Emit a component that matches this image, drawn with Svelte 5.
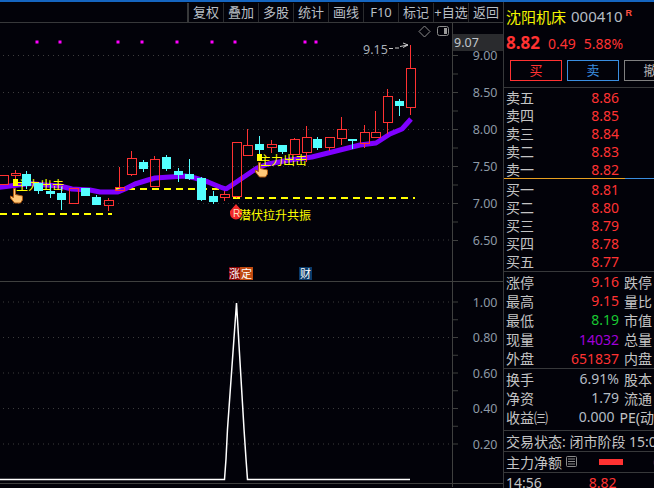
<script>
  const tools = ['复权','叠加','多股','统计','画线','F10','标记','+自选','返回'];
  // x, body top, body bottom, wick top, wick bottom, up?
  const candles = [
    [3,176,185,176,185,1],[15,174,176,171,180,1],[26,175,186,172,190,0],[38,184,191,184,195,0],
    [50,192,194,185,199,0],[61,194,200,188,211,0],[73,189,204,189,204,1],[85,189,196,189,196,0],
    [96,198,205,196,205,0],[108,201,206,199,212,1],[119,188,191,168,191,1],[131,159,175,152,177,1],
    [143,163,169,161,173,0],[154,160,187,157,187,1],[166,158,169,156,172,0],[178,172,175,169,183,0],
    [189,175,179,160,181,0],[201,179,200,178,202,0],[213,197,202,192,205,0],[224,195,198,192,202,1],
    [236,143,197,143,199,1],[247,146,156,130,156,1],[259,145,150,137,155,0],[271,145,148,141,154,1],
    [282,146,152,146,155,0],[294,140,155,139,155,1],[306,138,153,127,163,1],[317,140,148,138,151,0],
    [329,138,148,138,152,1],[341,130,139,118,146,1],[352,140,141,140,150,0],[364,133,144,126,149,1],
    [375,133,138,112,138,1],[387,97,123,90,135,1],[399,102,106,100,117,0],[410,69,108,46,116,1]
  ];
  const trend = [[-5,189],[10,187],[30,184.5],[45,186],[60,187],[72,190],[90,191],[100,193],[118,193],[125,190],[135,185],[148,181],[155,179],[170,178],[185,177],[195,179],[208,183],[220,188],[226,190],[232,186],[257,169],[268,165],[290,161],[312,158],[340,151],[360,146],[376,144],[390,135],[402,130],[411,120]]
    .map(p => p.join(',')).join(' ');
  const dots = [37,60,118,142,177,212,235,305,316];
  const priceAxis = [['9.00',56.5],['8.50',93.5],['8.00',130.5],['7.50',167.5],['7.00',204.5],['6.50',241]];
  const volAxis = [['1.00',303],['0.80',338.5],['0.60',374],['0.40',409.5],['0.20',445]];
  const priceTicks = Array.from({length: 11}, (_, i) => 56.5 + i * 18.5);
  const volTicks = Array.from({length: 9}, (_, i) => 303 + i * 17.75);
  const asks = [['卖五','8.86'],['卖四','8.85'],['卖三','8.84'],['卖二','8.83'],['卖一','8.82']];
  const bids = [['买一','8.81'],['买二','8.80'],['买三','8.79'],['买四','8.78'],['买五','8.77']];
  const stats = [
    ['涨停','9.16','red','跌停'],['最高','9.15','red','量比'],['最低','8.19','green','市值'],
    ['现量','14032','purple','总量'],['外盘','651837','red','内盘']
  ];
  const stats2 = [
    ['换手','6.91%','grey','股本'],['净资','1.79','grey','流通'],['收益㈢','0.000','grey','PE(动']
  ];
  const handPath = 'M3.5.5h2v6l7 1.5v4l-2 3H4.500l-4-5v-2l3 1.500z';
</script>

<div class="screen">
  <div class="topline"></div>
  <div class="main">
    <div class="left">
      <div class="toolbar">
        {#each tools as t}<div class="tool">{t}</div>{/each}
      </div>
      <svg class="chart" width="503" height="464" viewBox="0 24 503 464">
        {#each priceAxis as a}
          <line class="grid" x1="3" x2="452" y1={a[1]} y2={a[1]} />
        {/each}
        {#each volAxis as a}
          <line class="grid" x1="3" x2="452" y1={a[1]} y2={a[1]} />
        {/each}
        <line class="frame" x1="452.5" x2="452.5" y1="24" y2="488" />
        <line class="frame" x1="0" x2="503" y1="282.5" y2="282.5" />
        <line class="frame" x1="0" x2="503" y1="484.5" y2="484.5" />
        {#each priceTicks as y}<line class="frame" x1="452" x2="458" y1={y} y2={y} />{/each}
        {#each volTicks as y}<line class="frame" x1="452" x2="458" y1={y} y2={y} />{/each}
        {#each priceAxis as a}<text class="axis" x="497.500" y={a[1] + 4.5} text-anchor="end">{a[0]}</text>{/each}
        {#each volAxis as a}<text class="axis" x="497.500" y={a[1] + 4.5} text-anchor="end">{a[0]}</text>{/each}

        <rect x="453" y="35" width="50" height="17" fill="#2a2b2e" />
        <text class="axis light" x="454" y="48">9.07</text>

        {#each dots as x}<rect x={x - 1.5} y="41.5" width="3" height="3" fill="#ff00ff" />{/each}

        <polyline class="dash" points="0,215 112,215" />
        <polyline class="dash" points="116,190 220,190" />
        <polyline class="dash" points="233,199 415,199" />
        <polyline class="trend" points={trend} />
        <text class="sig" x="16" y="191">主力出击</text>

        <g shape-rendering="crispEdges">
          {#each candles as c}
            {#if c[5]}
              <line class="r" x1={c[0] + .5} x2={c[0] + .5} y1={c[3]} y2={c[1]} />
              <line class="r" x1={c[0] + .5} x2={c[0] + .5} y1={c[2]} y2={c[4]} />
              <rect class="r" x={c[0] - 4} y={c[1] + .5} width="9" height={c[2] - c[1]} />
            {:else}
              <line class="c" x1={c[0] + .5} x2={c[0] + .5} y1={c[3]} y2={c[4]} />
              <rect fill="#54ffff" x={c[0] - 4} y={c[1]} width="9" height={c[2] - c[1] + 1} />
            {/if}
          {/each}
        </g>

        <rect x="13" y="180" width="5" height="7" fill="#ffff00" />
        <g transform="translate(10,189)"><path class="hand" d={handPath} /></g>
        <rect x="257" y="155" width="5" height="7" fill="#ffff00" />
        <text class="sig" x="259" y="166">主力出击</text>
        <g transform="translate(255,163)"><path class="hand" d={handPath} /></g>

        <path d="M236 205l6 7v2.500a6 6 0 0 1-12 0V212z" fill="#f02a2a" />
        <text class="rmark" x="233" y="218">R</text>
        <text class="sig" x="239" y="220.500">潜伏拉升共振</text>

        <text class="note" x="363" y="55">9.15</text>
        <path class="arrow" d="M389 49.500h4m2-.5h4m1-1.500l8-1.500m-5-2l5 2-5 2.500" />
        <path class="icon" d="M424.500 27l5.500 5.500-5.500 5.500-5.500-5.500z" />
        <rect class="icon" x="437.500" y="27.500" width="11" height="9" rx="2" />
        <rect x="444" y="29" width="3" height="6" fill="#9a9a9a" />

        <rect x="229" y="268" width="11" height="13" fill="#8a0505" />
        <rect x="240" y="268" width="13" height="13" fill="#c04a10" />
        <rect x="299" y="268" width="13" height="13" fill="#0a3a6a" />
        <text class="tag" x="229" y="279">涨</text>
        <text class="tag" x="241" y="279">定</text>
        <text class="tag" x="300" y="279">财</text>

        <polyline class="vol" points="0,480.500 224.500,480.500 226,460 227.500,430 236.500,304 244,430 246,460 247.500,480.500 410,480.500" />
      </svg>
    </div>

    <aside class="panel">
      <div class="title">
        <span class="name">沈阳机床</span>
        <span class="code">000410</span>
        <span class="rflag">R</span>
      </div>
      <div class="price">
        <b>8.82</b><span>0.49</span><span>5.88%</span>
      </div>
      <div class="btns">
        <div class="btn buy">买</div>
        <div class="btn sell">卖</div>
        <div class="btn cancel">撤</div>
      </div>
      <div class="book first">
        {#each asks as r}
          <div class="row depth"><span class="lab">{r[0]}</span><span class="val red">{r[1]}</span></div>
        {/each}
      </div>
      <div class="split"><i></i><em></em></div>
      <div class="book bids">
        {#each bids as r}
          <div class="row depth"><span class="lab">{r[0]}</span><span class="val red">{r[1]}</span></div>
        {/each}
      </div>
      <div class="book sep">
        {#each stats as r}
          <div class="row quote"><span class="lab">{r[0]}</span><span class="val {r[2]}">{r[1]}</span><span class="lab2">{r[3]}</span></div>
        {/each}
      </div>
      <div class="book sep pad">
        {#each stats2 as r}
          <div class="row quote"><span class="lab">{r[0]}</span><span class="val {r[2]}">{r[1]}</span><span class="lab2">{r[3]}</span></div>
        {/each}
      </div>
      <div class="line sep">交易状态: 闭市阶段 15:00</div>
      <div class="line sep flow">
        <span>主力净额</span>
        <svg width="11" height="11" viewBox="0 0 11 11"><path d="M1.500.5h8a1 1 0 0 1 1 1v8a1 1 0 0 1-1 1h-8a1 1 0 0 1-1-1v-8a1 1 0 0 1 1-1zM2 3h7M2 5.500h7M2 8h7" fill="none" stroke="#8a8a8a"/></svg>
        <i class="bar"></i>
        <span class="edge">6</span>
      </div>
      <div class="line sep tick"><span>14:56</span><span class="tp">8.82</span></div>
    </aside>
  </div>
</div>

<style>
  :global(body) { margin: 0; background: #020209; overflow: hidden; }
  .screen {
    width: 654px; height: 488px; overflow: hidden; background: #020209; color: #c4c4c4;
    font-family: "Noto Sans", "Noto Sans CJK SC", sans-serif;
  }
  .topline { height: 2px; background: #1565c0; }
  .main { display: flex; height: 486px; }
  .left { width: 503px; flex: none; }
  .toolbar {
    display: flex; justify-content: flex-end; border-bottom: 1px solid #37383a;
    padding-top: 1px; height: 19px;
  }
  .tool {
    width: 34px; border-left: 1px solid #2a2b2e; font-size: 13px; line-height: 19px;
    text-align: center; white-space: nowrap; color: #b9bfc5; overflow: hidden;
  }
  .tool:first-child { border-left: 2px solid #37383a; }
  .chart { display: block; }
  .grid { stroke: #3c3c3c; stroke-width: 1; stroke-dasharray: 1 4; }
  .frame { stroke: #3f403f; stroke-width: 1; }
  .axis { font-family: "Noto Sans", sans-serif; font-size: 12.500px; fill: #8d99a6; }
  .light { fill: #c0c6cc; }
  .dash { stroke: #ffff00; stroke-width: 2; stroke-dasharray: 7 5; fill: none; }
  .trend { stroke: #7f00ff; stroke-width: 5; fill: none; stroke-linejoin: bevel; }
  .sig { font-family: "Noto Sans CJK SC", sans-serif; font-size: 12px; fill: #ffff00; }
  .r { stroke: #ff3232; fill: none; stroke-width: 1; }
  .c { stroke: #54ffff; stroke-width: 1; }
  .hand { fill: #ffc878; stroke: #b05a10; stroke-width: 1; }
  .rmark { font-family: "Liberation Sans", sans-serif; font-size: 10px; fill: #ffe0c0; }
  .note { font-family: "Noto Sans", sans-serif; font-size: 12.500px; fill: #a9b0b8; }
  .arrow { stroke: #c8c8c8; stroke-width: 1; fill: none; }
  .icon { stroke: #8c8c8c; stroke-width: 1; fill: none; }
  .tag { font-family: "Noto Sans CJK SC", sans-serif; font-size: 11px; fill: #fff; }
  .vol { stroke: #fff; stroke-width: 1.500; fill: none; }

  .panel { flex: 1; border-left: 1px solid #37383a; min-width: 0; overflow: hidden; font-size: 14px; }
  .title { display: flex; align-items: center; height: 18px; margin-top: 5px; padding-left: 2px; white-space: nowrap; }
  .name { font-size: 15px; color: #f4f400; }
  .code { font-size: 15px; color: #b4bcc4; margin-left: 5px; }
  .rflag { font: bold 9px "Liberation Sans", sans-serif; color: #ff5040; margin: -6px 0 0 3px; }
  .price { display: flex; align-items: baseline; height: 20px; margin-top: 6px; padding-left: 2px; color: #ff3232; font-size: 14px; white-space: nowrap; }
  .price b { font-size: 17px; width: 42px; }
  .price span { margin-right: 8px; }
  .btns { display: flex; gap: 5px; margin: 9px 0 0 6px; height: 21px; }
  .btn { flex: none; box-sizing: border-box; width: 52px; border: 1px solid; text-align: center; font-size: 13px; line-height: 19px; }
  .buy { border-color: #ff3232; color: #ff3232; }
  .sell { border-color: #3a8ee0; color: #3a8ee0; }
  .cancel { border-color: #808080; color: #b0b0b0; }
  .book.first { border-top: 1px solid #37383a; margin-top: 6px; }
  .row { display: flex; align-items: center; padding-left: 2px; white-space: nowrap; }
  .depth { height: 18px; }
  .quote { height: 19.200px; }
  .lab { width: 50px; color: #c4c4c4; }
  .val { width: 63px; text-align: right; font-size: 14px; }
  .lab2 { margin-left: 5px; color: #c4c4c4; }
  .red { color: #ff3232; }
  .green { color: #19c832; }
  .purple { color: #a000d8; }
  .grey { color: #b4bcc4; }
  .split { display: flex; height: 1px; margin-bottom: 1px; }
  .split i { width: 121px; background: #e8a020; }
  .split em { flex: 1; background: #3a8ee0; }
  .sep { border-top: 1px solid #37383a; }
  .book.bids { margin-bottom: 1px; }
  .book.pad { padding-bottom: 3px; }
  .line { display: flex; align-items: center; height: 20px; padding-left: 2px; white-space: nowrap; }
  .flow svg { margin-left: 4px; flex: none; }
  .bar { width: 24px; height: 6px; background: #ff3232; margin-left: 22px; flex: none; }
  .edge { color: #ff3232; margin-left: 30px; }
  .tp { color: #ff3232; margin-left: 47px; font-size: 14px; }
</style>
